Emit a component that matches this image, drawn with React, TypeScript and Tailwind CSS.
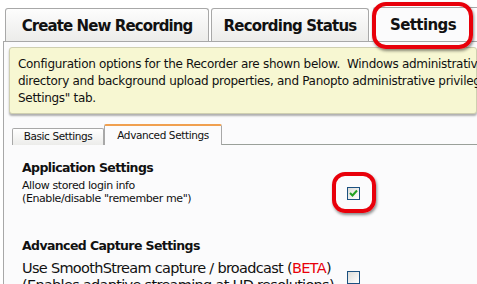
export default function App() {
  const font = { fontFamily: '"DejaVu Sans", Tahoma, sans-serif' }

  return (
    <div className="relative w-[477px] h-[284px] overflow-hidden bg-white text-[#111]" style={font}>
      {/* Tabs principais */}
      <div className="flex items-end pt-[7px] pl-[5px] h-[41px]">
        <div className="w-[204px] h-[33px] pt-[3px] flex items-center justify-center border border-b-0 border-[#a8a8a8] rounded-t-[3px] bg-gradient-to-b from-[#fdfdfd] to-[#ececea] font-bold text-[15px] tracking-[-0.9px]">
          Create New Recording
        </div>
        <div className="ml-[2px] w-[158px] h-[33px] pt-[3px] flex items-center justify-center border border-b-0 border-[#a8a8a8] rounded-t-[3px] bg-gradient-to-b from-[#fdfdfd] to-[#ececea] font-bold text-[15px] tracking-[-0.8px]">
          Recording Status
        </div>
        <div className="ml-[2px] w-[104px] h-[34px] pt-[3px] flex items-center justify-center bg-[#fbfbfc] font-bold text-[15px] tracking-[-0.6px]">
          Settings
        </div>
      </div>

      {/* Painel */}
      <div className="ml-[3px] border-l border-t border-[#a8a8a8] bg-[#fbfbfc] h-[260px]">
        <div className="ml-[5px] mt-[5px] h-[67px] bg-[#f7f7d2] border border-[#cfcfb0] rounded-[3px] shadow-[0_2px_2px_rgba(0,0,0,0.3)] pl-[8px] pt-[8px] text-[12px] leading-[17px] tracking-[-0.3px] whitespace-nowrap">
          <p>Configuration options for the Recorder are shown below.&nbsp; Windows administrative privileges are required</p>
          <p>directory and background upload properties, and Panopto administrative privileges are required for the "Advanced</p>
          <p>Settings" tab.</p>
        </div>

        {/* Sub tabs */}
        <div className="flex items-end ml-[8px] mt-[10px] h-[21px] text-[10.5px] tracking-[-0.4px]">
          <div className="w-[92px] h-[17px] flex items-center justify-center border border-b-0 border-[#a8a8a8] rounded-t-[2px] bg-gradient-to-b from-white to-[#ececea]">
            Basic Settings
          </div>
          <div className="w-[118px] h-[21px] flex items-center justify-center border-x border-t-2 border-x-[#a8a8a8] border-t-[#f0a050] rounded-t-[2px] bg-[#fbfbfc]">
            Advanced Settings
          </div>
        </div>
        <div className="border-t border-[#9aa09a] ml-[8px] -mt-px"></div>

        <div className="pl-[18px]">
          <h2 className="mt-[15px] font-bold text-[12.5px] leading-[16px] tracking-[-0.6px]">Application Settings</h2>
          <div className="flex items-center mt-[3px]">
            <div className="w-[325px] text-[11px] leading-[13px] tracking-[-0.4px]">
              <p>Allow stored login info</p>
              <p>(Enable/disable "remember me")</p>
            </div>
            <div className="mt-[2px] w-[13px] h-[13px] border border-[#1c5180] bg-gradient-to-br from-[#dcdcd8] to-white flex items-center justify-center">
              <svg width="9" height="8" viewBox="0 0 9 8">
                <path d="M1 4 L3.5 6.5 L8 1.5" fill="none" stroke="#21a121" strokeWidth="2" />
              </svg>
            </div>
          </div>

          <h2 className="mt-[33px] font-bold text-[12.5px] leading-[16px] tracking-[-0.6px]">Advanced Capture Settings</h2>
          <div className="flex items-center mt-[6px]">
            <div className="w-[325px] text-[14.5px] leading-[17px] tracking-[-0.7px] whitespace-nowrap">
              <p>Use SmoothStream capture / broadcast (<span className="text-[#e8000a]">BETA</span>)</p>
              <p>(Enables adaptive streaming at HD resolutions)</p>
            </div>
            <div className="w-[13px] h-[13px] border border-[#1c5180] bg-gradient-to-br from-[#dcdcd8] to-white"></div>
          </div>
        </div>
      </div>

      {/* Bordas do tab ativo */}
      <div className="absolute left-[373px] top-[7px] w-[104px] h-[34px] border-l border-t border-[#a8a8a8] rounded-tl-[3px]"></div>

      {/* Destaques em vermelho */}
      <div className="absolute left-[372px] top-[2px] w-[101px] h-[47px] border-[4px] border-[#e8000a] rounded-[14px] shadow-[1px_2px_3px_rgba(0,0,0,0.45)]"></div>
      <div className="absolute left-[332px] top-[172px] w-[44px] h-[41px] border-[4px] border-[#e8000a] rounded-[13px] shadow-[1px_2px_3px_rgba(0,0,0,0.45)]"></div>
    </div>
  )
}
